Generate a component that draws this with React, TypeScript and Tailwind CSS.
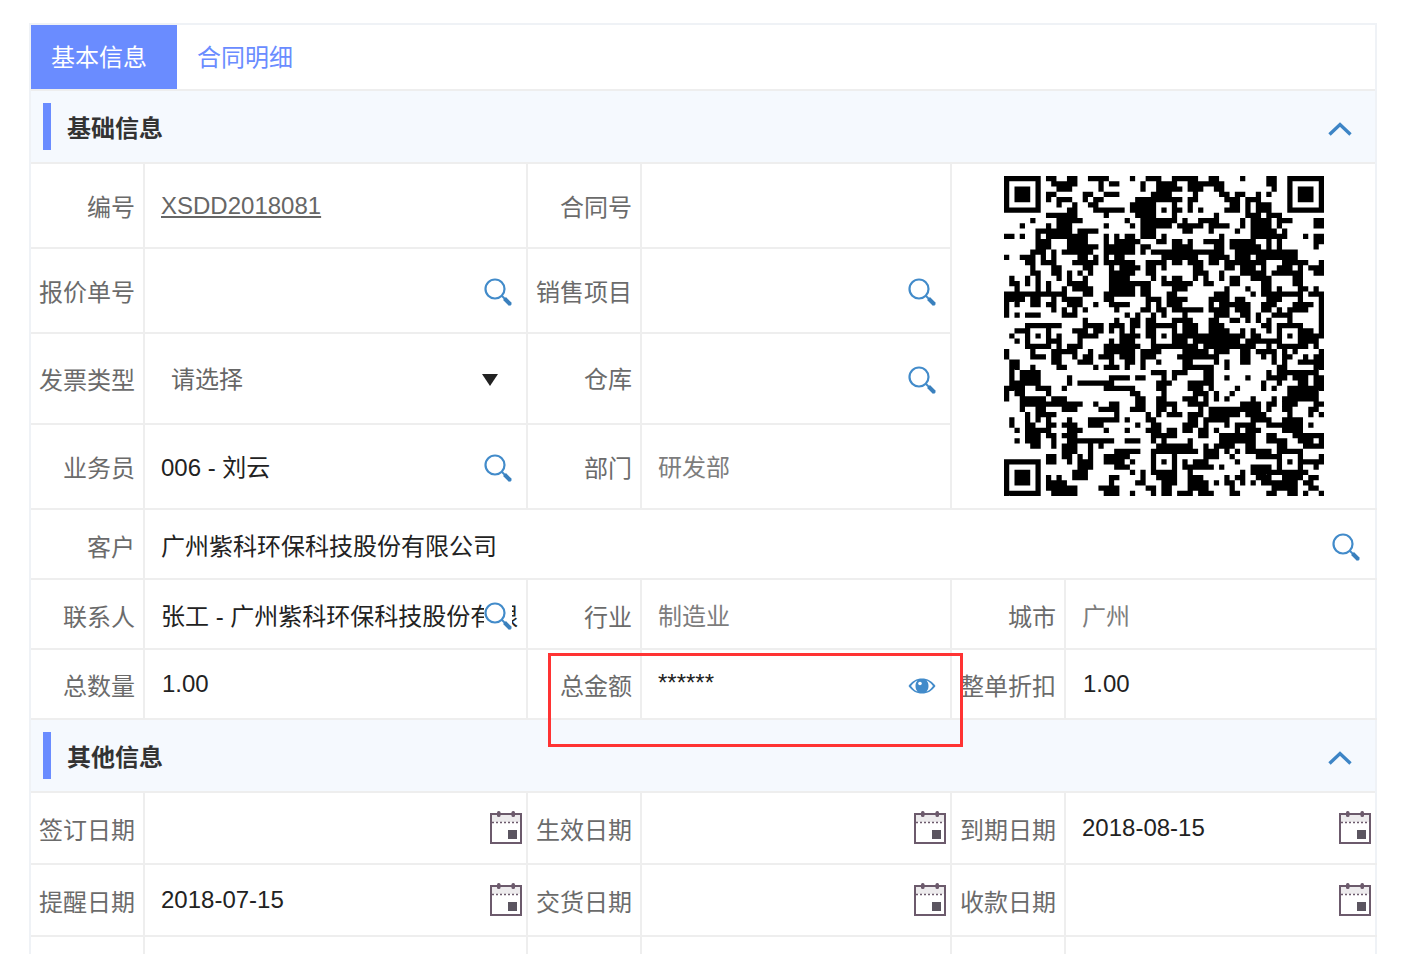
import { ReactNode } from "react";

const FONT = { fontFamily: '"Liberation Sans", "Noto Sans CJK SC", sans-serif' };

const SearchIcon = () => (
  <svg width="28" height="28" viewBox="0 0 28 28" className="shrink-0">
    <circle cx="11" cy="11" r="9.5" fill="none" stroke="#428bca" strokeWidth="2.2" />
    <path d="M18 18l9 9" stroke="#428bca" strokeWidth="2" />
    <path d="M20.5 20.5l6 6" stroke="#3a80bd" strokeWidth="4" />
  </svg>
);

const EyeIcon = () => (
  <svg width="28" height="18" viewBox="0 0 28 18" className="shrink-0">
    <path d="M0.5 9C4 4 8.5 1.5 14 1.5S24 4 27.5 9C24 14 19.500 16.500 14 16.500S4 14 0.500 9Z" fill="#428bca" />
    <path d="M3 9C5.500 5.500 8 4 9.500 3.500C8 5 7.500 7 7.500 9C7.500 11 8 13 9.500 14.500C8 14 5.500 12.500 3 9Z" fill="#fff" />
    <path d="M25 9C22.500 5.500 20 4 18.500 3.500C20 5 20.500 7 20.500 9C20.500 11 20 13 18.500 14.500C20 14 22.500 12.500 25 9Z" fill="#fff" />
    <circle cx="12" cy="6.500" r="1.800" fill="#fff" />
  </svg>
);

const CalendarIcon = () => (
  <svg width="32" height="34" viewBox="0 0 32 34" className="shrink-0">
    <rect x="1" y="4" width="30" height="29" fill="#fff" stroke="#6c5a6c" strokeWidth="2" />
    <rect x="1" y="4" width="30" height="8" fill="#6c5a6c" opacity="0.12" />
    <path d="M2 12.500H30" stroke="#6c5a6c" strokeWidth="1.500" strokeDasharray="2 2" />
    <rect x="7" y="1" width="3.500" height="6" rx="1.500" fill="#6c5a6c" />
    <rect x="21.500" y="1" width="3.500" height="6" rx="1.500" fill="#6c5a6c" />
    <rect x="18" y="20" width="9" height="9" fill="#5b5560" />
  </svg>
);

const Chevron = () => (
  <svg width="24" height="14" viewBox="0 0 24 14" className="mt-[4px]">
    <path d="M1.500 12.500L12 2.500L22.500 12.500" fill="none" stroke="#3d85c6" strokeWidth="3.400" />
  </svg>
);

// version 11 layout, 61 modules, data bits are filler
const buildQr = () => {
  const n = 61;
  const grid: number[][] = [];
  let seed = 20180815;
  const next = () => {
    seed = (seed * 1664525 + 1013904223) >>> 0;
    return (seed >>> 16) & 1023;
  };
  for (let y = 0; y < n; y++) {
    grid.push([]);
    for (let x = 0; x < n; x++) {
      const left = x > 0 ? grid[y][x - 1] : 0;
      const up = y > 0 ? grid[y - 1][x] : 0;
      const p = 500 + (left ? 130 : -130) + (up ? 130 : -130);
      grid[y].push(next() < p ? 1 : 0);
    }
  }
  const finder = (ox: number, oy: number) => {
    for (let y = -1; y <= 7; y++) {
      for (let x = -1; x <= 7; x++) {
        const gx = ox + x;
        const gy = oy + y;
        if (gx < 0 || gy < 0 || gx >= n || gy >= n) continue;
        const ring = x >= 0 && x <= 6 && y >= 0 && y <= 6 && (x === 0 || x === 6 || y === 0 || y === 6);
        const core = x >= 2 && x <= 4 && y >= 2 && y <= 4;
        grid[gy][gx] = ring || core ? 1 : 0;
      }
    }
  };
  finder(0, 0);
  finder(n - 7, 0);
  finder(0, n - 7);
  [6, 30, 54].forEach((cy) =>
    [6, 30, 54].forEach((cx) => {
      if ((cx === 6 && cy === 6) || (cx === 54 && cy === 6) || (cx === 6 && cy === 54)) return;
      for (let y = -2; y <= 2; y++) {
        for (let x = -2; x <= 2; x++) {
          grid[cy + y][cx + x] = Math.max(Math.abs(x), Math.abs(y)) === 1 ? 0 : 1;
        }
      }
    })
  );
  let d = "";
  grid.forEach((row, y) =>
    row.forEach((v, x) => {
      if (v) d += `M${x} ${y}h1v1h-1z`;
    })
  );
  return d;
};

const qrPath = buildQr();

const QrCode = () => (
  <svg width="320" height="320" viewBox="0 0 61 61">
    <path d={qrPath} fill="#000" />
  </svg>
);

const Label = ({ children, className = "pt-[4px]" }: { children?: ReactNode; className?: string }) => (
  <div className={`flex items-center justify-end border-b-2 border-r-2 border-[#eeeeee] pr-2 text-[24px] text-[#6b6b6b] ${className}`}>
    {children}
  </div>
);

const Value = ({
  text,
  muted,
  icon,
  className = "",
}: {
  text?: ReactNode;
  muted?: boolean;
  icon?: "search" | "calendar" | "eye";
  className?: string;
}) => (
  <div
    className={`flex items-center justify-between border-b-2 border-[#eeeeee] pl-4 text-[24px] ${
      icon === "calendar" ? "pr-[4px]" : "pr-[14px]"
    } ${muted ? "text-[#7d7d7d]" : "text-[#222222]"} ${className}`}
  >
    <span className="whitespace-nowrap">{text}</span>
    {icon === "search" && <SearchIcon />}
    {icon === "calendar" && (
      <span className="mb-[2px]">
        <CalendarIcon />
      </span>
    )}
    {icon === "eye" && <EyeIcon />}
  </div>
);

const SectionHeader = ({ title }: { title: string }) => (
  <div className="flex h-[73px] items-center justify-between border-b-2 border-[#eeeeee] bg-[#f5f9fe] pl-3 pr-[23px]">
    <div className="flex items-center gap-4">
      <div className="h-[47px] w-2 bg-[#6a8cff]" />
      <span className="mt-[4px] text-[24px] font-bold text-[#333333]">{title}</span>
    </div>
    <Chevron />
  </div>
);

const COLS = "grid-cols-[114px_383px_114px_310px_114px_311px]";

export default function App() {
  return (
    <div className="h-[954px] overflow-hidden bg-white pl-[29px] pt-[23px]" style={FONT}>
      <div className="relative w-[1348px] border-2 border-[#eff2f6]">
        <div className="flex h-[66px] border-b-2 border-[#eeeeee]">
          <div className="flex w-[146px] items-center bg-[#6a8cff] pl-5 pt-[2px] text-[24px] text-white">基本信息</div>
          <div className="flex w-[136px] items-center pl-5 pt-[2px] text-[24px] text-[#6a8cff]">合同明细</div>
        </div>

        <SectionHeader title="基础信息" />

        <div className={`grid ${COLS} grid-rows-[85px_85px_91px_85px_70px_70px_70px]`}>
          <Label>编号</Label>
          <Value text={<span className="text-[#666666] underline">XSDD2018081</span>} className="border-r-2" />
          <Label>合同号</Label>
          <Value className="border-r-2" />
          <div className="col-span-2 row-span-4 flex items-start justify-start border-b-2 border-[#eeeeee] pl-[52px] pt-3">
            <QrCode />
          </div>

          <Label>报价单号</Label>
          <Value icon="search" className="border-r-2 pt-[2px]" />
          <Label>销售项目</Label>
          <Value icon="search" className="border-r-2 pt-[2px]" />

          <Label>发票类型</Label>
          <div className="flex items-center justify-between border-b-2 border-r-2 border-[#eeeeee] pl-[26px] pr-[28px] pt-[2px] text-[24px] text-[#666666]">
            <span>请选择</span>
            <div className="h-0 w-0 border-x-[8px] border-t-[12px] border-x-transparent border-t-[#222222]" />
          </div>
          <Label className="pt-[2px]">仓库</Label>
          <Value icon="search" className="border-r-2 pt-[2px]" />

          <Label>业务员</Label>
          <Value text="006 - 刘云" icon="search" className="border-r-2 pt-[3px]" />
          <Label>部门</Label>
          <Value text="研发部" muted className="border-r-2 pt-[3px]" />

          <Label className="pt-[8px]">客户</Label>
          <Value text="广州紫科环保科技股份有限公司" icon="search" className="col-span-5 pr-[17px] pt-[6px]" />

          <Label className="pt-[8px]">联系人</Label>
          <div className="relative flex items-center overflow-hidden border-b-2 border-r-2 border-[#eeeeee] pl-4 pr-2 pt-[6px] text-[24px] text-[#222222]">
            <span className="block w-full overflow-hidden whitespace-nowrap">张工 - 广州紫科环保科技股份有限公司</span>
            <div className="absolute right-[14px] top-[22px] bg-white">
              <SearchIcon />
            </div>
          </div>
          <Label className="pt-[8px]">行业</Label>
          <Value text="制造业" muted className="border-r-2 pt-[6px]" />
          <Label className="pt-[8px]">城市</Label>
          <Value text="广州" muted className="pt-[6px]" />

          <Label className="pt-[6px]">总数量</Label>
          <Value text={<span className="ml-px">1.00</span>} className="border-r-2" />
          <Label className="pt-[6px]">总金额</Label>
          <Value text={<span className="relative top-[-3px]">******</span>} icon="eye" className="border-r-2 pt-[4px]" />
          <Label className="pt-[6px]">整单折扣</Label>
          <Value text={<span className="ml-px">1.00</span>} />
        </div>

        <SectionHeader title="其他信息" />

        <div className={`grid ${COLS} grid-rows-[72px_72px_72px]`}>
          <Label className="pt-[6px]">签订日期</Label>
          <Value icon="calendar" className="border-r-2" />
          <Label className="pt-[6px]">生效日期</Label>
          <Value icon="calendar" className="border-r-2" />
          <Label className="pt-[6px]">到期日期</Label>
          <Value text="2018-08-15" icon="calendar" className="pr-[6px]" />

          <Label className="pt-[6px]">提醒日期</Label>
          <Value text="2018-07-15" icon="calendar" className="border-r-2" />
          <Label className="pt-[6px]">交货日期</Label>
          <Value icon="calendar" className="border-r-2" />
          <Label className="pt-[6px]">收款日期</Label>
          <Value icon="calendar" className="pr-[6px]" />

          <Label />
          <Value className="border-r-2" />
          <Label />
          <Value className="border-r-2" />
          <Label />
          <Value />
        </div>

        {/* red annotation box from the original screenshot */}
        <div className="absolute left-[517px] top-[628px] h-[94px] w-[415px] border-[3px] border-[#ff3333]" />
      </div>
    </div>
  );
}
